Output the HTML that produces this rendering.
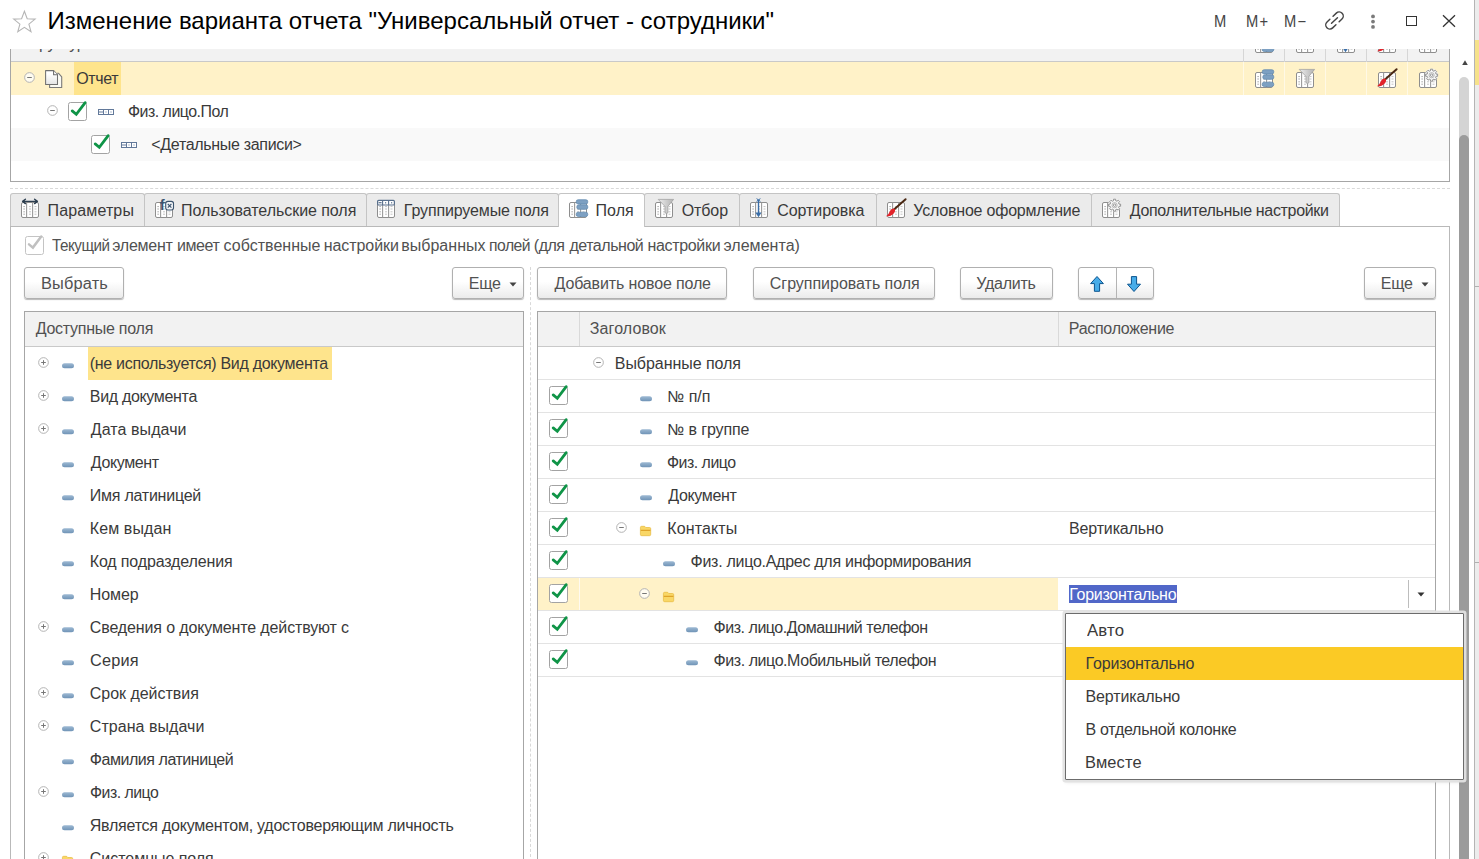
<!DOCTYPE html>
<html lang="ru"><head><meta charset="utf-8"><title>Изменение варианта отчета</title>
<style>
html,body{margin:0;padding:0;}
body{width:1479px;height:859px;overflow:hidden;background:#fff;position:relative;font-family:"Liberation Sans",sans-serif;font-size:16px;color:#333;}
svg{overflow:visible;}
.abs{position:absolute;}
.t{position:absolute;white-space:nowrap;line-height:20px;height:20px;font-size:16px;color:#3a3a3a;}
.hd{color:#515151;}
.btn{position:absolute;box-sizing:border-box;height:32px;border:1px solid #b0b0b0;border-radius:3px;background:linear-gradient(#ffffff 45%,#ebebeb);box-shadow:0 1px 1px rgba(0,0,0,.28);}
.tab{position:absolute;box-sizing:border-box;top:193px;height:33px;border:1px solid #c4c4c4;border-bottom:none;border-radius:3px 3px 0 0;background:#ebebeb;}
</style></head><body>
<svg class="abs" width="0" height="0"><defs><linearGradient id="dg" x1="0" y1="0" x2="0" y2="1"><stop offset="0" stop-color="#9db9d3"/><stop offset="1" stop-color="#6f93b6"/></linearGradient><linearGradient id="pg" x1="0" y1="0" x2="0" y2="1"><stop offset="0.25" stop-color="#ffffff"/><stop offset="1" stop-color="#e4e4e4"/></linearGradient><linearGradient id="fg" x1="0" y1="0" x2="1" y2="0"><stop offset="0" stop-color="#ededed"/><stop offset="1" stop-color="#b2b2b2"/></linearGradient></defs></svg>

<div class="abs" style="left:10px;top:49px;width:1440px;height:133px;box-sizing:border-box;border:1px solid #a6a6a6;border-top:none;background:#fff"></div>
<div class="abs" style="left:11px;top:49px;width:1438px;height:12px;background:#f2f2f2"></div>
<div class="abs" style="left:11px;top:61px;width:1438px;height:1px;background:#c9c9c9"></div>
<div class="abs" style="left:11px;top:49px;width:400px;height:12px;overflow:hidden"><div class="abs" style="left:-11px;top:-49px;width:500px;height:70px"><div id="t1" class="t hd" style="left:20.80px;top:33.5px;letter-spacing:-0.300px;">Структура отчета</div></div></div>
<div class="abs" style="left:11px;top:62px;width:1438px;height:33px;background:#fff2c8"></div>
<div class="abs" style="left:74px;top:62px;width:47px;height:33px;background:#fee48c"></div>
<div class="abs" style="left:11px;top:128px;width:1438px;height:33px;background:#f9f9f9"></div>
<div class="abs" style="left:1243px;top:49px;width:1px;height:13px;background:#d6d6d6"></div>
<div class="abs" style="left:1243px;top:62px;width:1px;height:33px;background:#fff9e6"></div>
<div class="abs" style="left:1284px;top:49px;width:1px;height:13px;background:#d6d6d6"></div>
<div class="abs" style="left:1284px;top:62px;width:1px;height:33px;background:#fff9e6"></div>
<div class="abs" style="left:1325px;top:49px;width:1px;height:13px;background:#d6d6d6"></div>
<div class="abs" style="left:1325px;top:62px;width:1px;height:33px;background:#fff9e6"></div>
<div class="abs" style="left:1366px;top:49px;width:1px;height:13px;background:#d6d6d6"></div>
<div class="abs" style="left:1366px;top:62px;width:1px;height:33px;background:#fff9e6"></div>
<div class="abs" style="left:1407px;top:49px;width:1px;height:13px;background:#d6d6d6"></div>
<div class="abs" style="left:1407px;top:62px;width:1px;height:33px;background:#fff9e6"></div>
<svg class="abs" style="left:24.0px;top:72.0px" width="11" height="11" viewBox="0 0 11 11"><circle cx="5.5" cy="5.5" r="4.85" fill="#fff" fill-opacity=".75" stroke="#b4b4b4" stroke-width="1"/><path d="M3.2 5.5H7.8" stroke="#777" stroke-width="1"/></svg>
<svg class="abs" style="left:45px;top:69.6px" width="18" height="19" viewBox="0 0 18 19"><path d="M12.2 3.2H13.4L16.7 6.9V17.5H4.6V14.4" fill="#fbfaf3" stroke="#7a7a7a" stroke-width="1.1" stroke-linejoin="round"/><path d="M0.6 0.6H8.6L12.5 4.7V14.5H0.6Z" fill="url(#pg)" stroke="#707070" stroke-width="1.05" stroke-linejoin="round"/><path d="M8.6 0.8V4.7H12.3" fill="#fff" stroke="#6e6e6e" stroke-width="1.1"/></svg>
<div id="t2" class="t " style="left:76.30px;top:69px;letter-spacing:-0.375px;">Отчет</div>
<svg class="abs" style="left:47.0px;top:105.0px" width="11" height="11" viewBox="0 0 11 11"><circle cx="5.5" cy="5.5" r="4.85" fill="#fff" fill-opacity=".75" stroke="#b4b4b4" stroke-width="1"/><path d="M3.2 5.5H7.8" stroke="#777" stroke-width="1"/></svg>
<svg class="abs" style="left:68px;top:102px" width="19" height="19" viewBox="0 0 19 19"><rect x="0.5" y="0.5" width="18" height="18" rx="2" ry="2" fill="#fff" stroke="#a3a3a3"/><path d="M4.2 8.9 L8.3 12.3 L17.2 0.7" fill="none" stroke="#0f9447" stroke-width="2.8" stroke-linecap="round" stroke-linejoin="miter"/></svg>
<svg class="abs" style="left:98px;top:109px" width="16" height="6" viewBox="0 0 16 6"><rect x="0.5" y="0.5" width="15" height="5" fill="#fff" stroke="#62799a"/><path d="M5.5 0.5V5.5M10.5 0.5V5.5" stroke="#62799a"/><path d="M1 3H5" stroke="#62799a"/><rect x="7.5" y="2.5" width="1" height="1" fill="#62799a"/><rect x="12.5" y="2.5" width="1" height="1" fill="#62799a"/></svg>
<div id="t3" class="t " style="left:128.01px;top:102px;letter-spacing:-0.500px;transform:scaleX(0.994);transform-origin:0 0;">Физ. лицо.Пол</div>
<svg class="abs" style="left:91px;top:135px" width="19" height="19" viewBox="0 0 19 19"><rect x="0.5" y="0.5" width="18" height="18" rx="2" ry="2" fill="#fff" stroke="#a3a3a3"/><path d="M4.2 8.9 L8.3 12.3 L17.2 0.7" fill="none" stroke="#0f9447" stroke-width="2.8" stroke-linecap="round" stroke-linejoin="miter"/></svg>
<svg class="abs" style="left:121px;top:142px" width="16" height="6" viewBox="0 0 16 6"><rect x="0.5" y="0.5" width="15" height="5" fill="#fff" stroke="#62799a"/><path d="M5.5 0.5V5.5M10.5 0.5V5.5" stroke="#62799a"/><path d="M1 3H5" stroke="#62799a"/><rect x="7.5" y="2.5" width="1" height="1" fill="#62799a"/><rect x="12.5" y="2.5" width="1" height="1" fill="#62799a"/></svg>
<div id="t4" class="t " style="left:151.30px;top:135px;letter-spacing:-0.318px;">&lt;Детальные записи&gt;</div>
<svg class="abs" style="left:1255px;top:72.4px" width="18" height="16" viewBox="0 0 18 16"><rect x="0.5" y="0.5" width="17" height="15" rx="1.5" fill="#fff" stroke="#8e8e8e"/><path d="M5.6 0.5V15.5M11.6 0.5V15.5" stroke="#9a9a9a" stroke-width="1.1"/><path d="M2.5 4.6h1.2M2.5 7h1.2M2.5 9.8h1.2M2.5 12.2h1.2" stroke="#8f8f8f" stroke-width="1"/><path d="M8 4.6h2M8 7h2M8 9.8h2M8 12.2h2M13.5 4.6h2M13.5 7h2M13.5 9.8h2M13.5 12.2h2" stroke="#c4c4c4" stroke-width="1"/><rect x="7.2" y="-2.3" width="11.6" height="4.3" rx="2" fill="#7da0c2" stroke="#5d86ae" stroke-width=".7"/><rect x="7.8" y="2.8" width="11" height="4.5" rx="2" fill="#7da0c2" stroke="#5d86ae" stroke-width=".7"/><rect x="7.2" y="10.2" width="11.6" height="4.3" rx="2" fill="#7da0c2" stroke="#5d86ae" stroke-width=".7"/></svg>
<svg class="abs" style="left:1296px;top:72.4px" width="18" height="16" viewBox="0 0 18 16"><rect x="0.5" y="0.5" width="17" height="15" rx="1.5" fill="#fff" stroke="#8e8e8e"/><path d="M5.6 0.5V15.5M11.6 0.5V15.5" stroke="#9a9a9a" stroke-width="1.1"/><path d="M2.5 4.6h1.2M2.5 7h1.2M2.5 9.8h1.2M2.5 12.2h1.2" stroke="#8f8f8f" stroke-width="1"/><path d="M8 4.6h2M8 7h2M8 9.8h2M8 12.2h2M13.5 4.6h2M13.5 7h2M13.5 9.8h2M13.5 12.2h2" stroke="#c4c4c4" stroke-width="1"/><path d="M3.2 -2.6H18.6L12.9 4.4V10.8Q11.4 11.8 10 10.8V4.4Z" fill="url(#fg)" stroke="#a2a2a2" stroke-width=".8" stroke-linejoin="round"/></svg>
<svg class="abs" style="left:1378.4px;top:72.4px" width="18" height="16" viewBox="0 0 18 16"><rect x="0.5" y="0.5" width="17" height="15" rx="1.5" fill="#fff" stroke="#8e8e8e"/><path d="M5.6 0.5V15.5M11.6 0.5V15.5" stroke="#9a9a9a" stroke-width="1.1"/><path d="M2.5 4.6h1.2M2.5 7h1.2M2.5 9.8h1.2M2.5 12.2h1.2" stroke="#8f8f8f" stroke-width="1"/><path d="M8 4.6h2M8 7h2M8 9.8h2M8 12.2h2M13.5 4.6h2M13.5 7h2M13.5 9.8h2M13.5 12.2h2" stroke="#c4c4c4" stroke-width="1"/><path d="M18.6 -2.8L7 7.6" stroke="#4a2813" stroke-width="2" stroke-linecap="round"/><path d="M7.4 6.4Q9.4 9.6 5.6 12.4Q2.6 14.8 -1 14.2Q1.8 12.6 2.6 9.8Q3.8 6.2 7.4 6.4Z" fill="#e2242b"/></svg>
<svg class="abs" style="left:1419px;top:72.4px" width="18" height="16" viewBox="0 0 18 16"><rect x="0.5" y="0.5" width="17" height="15" rx="1.5" fill="#fff" stroke="#8e8e8e"/><path d="M5.6 0.5V15.5M11.6 0.5V15.5" stroke="#9a9a9a" stroke-width="1.1"/><path d="M2.5 4.6h1.2M2.5 7h1.2M2.5 9.8h1.2M2.5 12.2h1.2" stroke="#8f8f8f" stroke-width="1"/><path d="M8 4.6h2M8 7h2M8 9.8h2M8 12.2h2M13.5 4.6h2M13.5 7h2M13.5 9.8h2M13.5 12.2h2" stroke="#c4c4c4" stroke-width="1"/><circle cx="12.6" cy="3.2" r="6.6" fill="#f1f1f1" fill-opacity=".9"/><path d="M17.07 2.13L18.61 2.15L18.61 4.25L17.07 4.27L16.52 5.60L17.59 6.71L16.11 8.19L15.00 7.12L13.67 7.67L13.65 9.21L11.55 9.21L11.53 7.67L10.20 7.12L9.09 8.19L7.61 6.71L8.68 5.60L8.13 4.27L6.59 4.25L6.59 2.15L8.13 2.13L8.68 0.80L7.61 -0.31L9.09 -1.79L10.20 -0.72L11.53 -1.27L11.55 -2.81L13.65 -2.81L13.67 -1.27L15.00 -0.72L16.11 -1.79L17.59 -0.31L16.52 0.80Z" fill="#f7f7f7" stroke="#8a8a8a" stroke-width=".9" stroke-linejoin="round"/><circle cx="12.6" cy="3.2" r="2.6" fill="none" stroke="#a8a8a8" stroke-width=".8"/><circle cx="12.6" cy="3.2" r="1.2" fill="#fff" stroke="#8a8a8a" stroke-width=".9"/></svg>
<div class="abs" style="left:1244px;top:49px;width:205px;height:4px;overflow:hidden">
<svg class="abs" style="left:11px;top:-12px" width="18" height="16" viewBox="0 0 18 16"><rect x="0.5" y="0.5" width="17" height="15" rx="1.5" fill="#fff" stroke="#8e8e8e"/><path d="M5.6 0.5V15.5M11.6 0.5V15.5" stroke="#9a9a9a" stroke-width="1.1"/><path d="M2.5 4.6h1.2M2.5 7h1.2M2.5 9.8h1.2M2.5 12.2h1.2" stroke="#8f8f8f" stroke-width="1"/><path d="M8 4.6h2M8 7h2M8 9.8h2M8 12.2h2M13.5 4.6h2M13.5 7h2M13.5 9.8h2M13.5 12.2h2" stroke="#c4c4c4" stroke-width="1"/><rect x="7.2" y="-2.3" width="11.6" height="4.3" rx="2" fill="#7da0c2" stroke="#5d86ae" stroke-width=".7"/><rect x="7.8" y="2.8" width="11" height="4.5" rx="2" fill="#7da0c2" stroke="#5d86ae" stroke-width=".7"/><rect x="7.2" y="10.2" width="11.6" height="4.3" rx="2" fill="#7da0c2" stroke="#5d86ae" stroke-width=".7"/></svg>
<svg class="abs" style="left:52px;top:-12px" width="18" height="16" viewBox="0 0 18 16"><rect x="0.5" y="0.5" width="17" height="15" rx="1.5" fill="#fff" stroke="#8e8e8e"/><path d="M5.6 0.5V15.5M11.6 0.5V15.5" stroke="#9a9a9a" stroke-width="1.1"/><path d="M2.5 4.6h1.2M2.5 7h1.2M2.5 9.8h1.2M2.5 12.2h1.2" stroke="#8f8f8f" stroke-width="1"/><path d="M8 4.6h2M8 7h2M8 9.8h2M8 12.2h2M13.5 4.6h2M13.5 7h2M13.5 9.8h2M13.5 12.2h2" stroke="#c4c4c4" stroke-width="1"/><rect x="0.6" y="-1.6" width="16.8" height="4.6" rx="1" fill="#fff" stroke="#586f8c" stroke-width="1.2"/><path d="M5.6 -1.6V3M11.6 -1.6V3" stroke="#586f8c" stroke-width="1.1"/><path d="M1.6 0.7H4.6" stroke="#586f8c" stroke-width="1.2"/><rect x="8" y="0.2" width="1.2" height="1.2" fill="#586f8c"/><rect x="14" y="0.2" width="1.2" height="1.2" fill="#586f8c"/></svg>
<svg class="abs" style="left:93px;top:-12px" width="18" height="16" viewBox="0 0 18 16"><rect x="0.5" y="0.5" width="17" height="15" rx="1.5" fill="#fff" stroke="#8e8e8e"/><path d="M5.6 0.5V15.5M11.6 0.5V15.5" stroke="#9a9a9a" stroke-width="1.1"/><path d="M2.5 4.6h1.2M2.5 7h1.2M2.5 9.8h1.2M2.5 12.2h1.2" stroke="#8f8f8f" stroke-width="1"/><path d="M8 4.6h2M8 7h2M8 9.8h2M8 12.2h2M13.5 4.6h2M13.5 7h2M13.5 9.8h2M13.5 12.2h2" stroke="#c4c4c4" stroke-width="1"/><path d="M8.5 -2V13" stroke="#3a6ea8" stroke-width="1.4"/><path d="M6.6 -3.4L10.4 -0.6M10.4 -3.4L6.6 -0.6" stroke="#3a6ea8" stroke-width="1"/><path d="M5.4 10.6H11.6L8.5 15.2Z" fill="#3a6ea8"/></svg>
<svg class="abs" style="left:134.4000000000001px;top:-12px" width="18" height="16" viewBox="0 0 18 16"><rect x="0.5" y="0.5" width="17" height="15" rx="1.5" fill="#fff" stroke="#8e8e8e"/><path d="M5.6 0.5V15.5M11.6 0.5V15.5" stroke="#9a9a9a" stroke-width="1.1"/><path d="M2.5 4.6h1.2M2.5 7h1.2M2.5 9.8h1.2M2.5 12.2h1.2" stroke="#8f8f8f" stroke-width="1"/><path d="M8 4.6h2M8 7h2M8 9.8h2M8 12.2h2M13.5 4.6h2M13.5 7h2M13.5 9.8h2M13.5 12.2h2" stroke="#c4c4c4" stroke-width="1"/><path d="M18.6 -2.8L7 7.6" stroke="#4a2813" stroke-width="2" stroke-linecap="round"/><path d="M7.4 6.4Q9.4 9.6 5.6 12.4Q2.6 14.8 -1 14.2Q1.8 12.6 2.6 9.8Q3.8 6.2 7.4 6.4Z" fill="#e2242b"/></svg>
<svg class="abs" style="left:175px;top:-12px" width="18" height="16" viewBox="0 0 18 16"><rect x="0.5" y="0.5" width="17" height="15" rx="1.5" fill="#fff" stroke="#8e8e8e"/><path d="M5.6 0.5V15.5M11.6 0.5V15.5" stroke="#9a9a9a" stroke-width="1.1"/><path d="M2.5 4.6h1.2M2.5 7h1.2M2.5 9.8h1.2M2.5 12.2h1.2" stroke="#8f8f8f" stroke-width="1"/><path d="M8 4.6h2M8 7h2M8 9.8h2M8 12.2h2M13.5 4.6h2M13.5 7h2M13.5 9.8h2M13.5 12.2h2" stroke="#c4c4c4" stroke-width="1"/><circle cx="12.6" cy="3.2" r="6.6" fill="#f1f1f1" fill-opacity=".9"/><path d="M17.07 2.13L18.61 2.15L18.61 4.25L17.07 4.27L16.52 5.60L17.59 6.71L16.11 8.19L15.00 7.12L13.67 7.67L13.65 9.21L11.55 9.21L11.53 7.67L10.20 7.12L9.09 8.19L7.61 6.71L8.68 5.60L8.13 4.27L6.59 4.25L6.59 2.15L8.13 2.13L8.68 0.80L7.61 -0.31L9.09 -1.79L10.20 -0.72L11.53 -1.27L11.55 -2.81L13.65 -2.81L13.67 -1.27L15.00 -0.72L16.11 -1.79L17.59 -0.31L16.52 0.80Z" fill="#f7f7f7" stroke="#8a8a8a" stroke-width=".9" stroke-linejoin="round"/><circle cx="12.6" cy="3.2" r="2.6" fill="none" stroke="#a8a8a8" stroke-width=".8"/><circle cx="12.6" cy="3.2" r="1.2" fill="#fff" stroke="#8a8a8a" stroke-width=".9"/></svg>
</div>
<div class="abs" style="left:0;top:0;width:1474px;height:49px;background:#fff"></div>
<svg class="abs" style="left:12px;top:9px" width="26" height="24" viewBox="0 0 26 24"><path d="M12.4 2.3 L15.2 9.8 L23.1 10.1 L16.9 15.1 L19.0 22.7 L12.4 18.3 L5.8 22.7 L7.9 15.1 L1.7 10.1 L9.6 9.8 Z" fill="#fff" stroke="#b5b5b5" stroke-width="1.1" stroke-linejoin="miter"/></svg>
<div class="abs" style="left:47.5px;top:6px;font-size:24px;line-height:30px;white-space:nowrap;color:#000" id="title">Изменение варианта отчета "Универсальный отчет - сотрудники"</div>
<div class="t" style="left:1213.5px;top:12px;color:#444;transform:scaleX(.92);transform-origin:0 0">M</div>
<div class="t" style="left:1245.5px;top:12px;color:#444;letter-spacing:1.3px;transform:scaleX(.92);transform-origin:0 0">M+</div>
<div class="t" style="left:1283.5px;top:12px;color:#444;letter-spacing:1.3px;transform:scaleX(.92);transform-origin:0 0">M−</div>
<svg class="abs" style="left:1320px;top:6px" width="30" height="30" viewBox="1320 6 30 30" fill="none" stroke="#444" stroke-width="1.45" stroke-linecap="round"><g transform="translate(1334.5 20.5) rotate(-43.5)"><path d="M1.9 -4.1H6.4A4.1 4.1 0 0 1 6.4 4.1H2.5"/><path d="M-1.9 4.1H-6.4A4.1 4.1 0 0 1 -6.4 -4.1H-2.5"/><path d="M-4.1 0H4.1"/></g></svg>
<svg class="abs" style="left:1369px;top:12.5px" width="8" height="18" viewBox="0 0 8 18"><circle cx="4" cy="3.4" r="1.9" fill="#7a7a7a"/><circle cx="4" cy="8.6" r="1.9" fill="#7a7a7a"/><circle cx="4" cy="13.9" r="1.9" fill="#7a7a7a"/></svg>
<div class="abs" style="left:1406.2px;top:15.8px;width:8.4px;height:8.4px;border:1.25px solid #333"></div>
<svg class="abs" style="left:1442px;top:14px" width="14" height="14" viewBox="0 0 14 14"><path d="M1 1.3L13 12.7M13 1.3L1 12.7" stroke="#333" stroke-width="1.3"/></svg>
<div class="abs" style="left:10px;top:188px;width:1440px;height:0;border-top:1px dashed #d9d9d9"></div>
<div class="abs" style="left:1450px;top:49px;width:24px;height:810px;background:#fff"></div>
<svg class="abs" style="left:1461.5px;top:60px" width="6" height="5" viewBox="0 0 6 5"><path d="M3 0.2L5.8 5H0.2Z" fill="#444"/></svg>
<div class="abs" style="left:1459px;top:77px;width:10px;height:800px;border-radius:5px;background:#d4d4d4"></div>
<div class="abs" style="left:1459px;top:135px;width:10px;height:800px;border-radius:5px;background:#9b9b9b"></div>
<div class="abs" style="left:1474px;top:0;width:5px;height:859px;background:#ececec;border-left:1px solid #b4b4b4;box-sizing:border-box"></div>
<div class="abs" style="left:1475px;top:40px;width:4px;height:45px;background:#f6e28a"></div>
<div class="abs" style="left:1475px;top:286px;width:4px;height:1px;background:#b0b0b0"></div>
<div class="abs" style="left:1475px;top:562px;width:4px;height:1px;background:#b0b0b0"></div>
<div class="abs" style="left:10px;top:226px;width:1440px;height:700px;box-sizing:border-box;border:1px solid #b9b9b9;background:#fff"></div>
<div class="tab" style="left:10px;width:135px;"></div>
<div id="t5" class="t " style="left:47.55px;top:200.5px;letter-spacing:0.131px;">Параметры</div>
<div class="tab" style="left:144px;width:223px;"></div>
<div id="t6" class="t " style="left:181.05px;top:200.5px;letter-spacing:-0.053px;">Пользовательские поля</div>
<div class="tab" style="left:366px;width:193px;"></div>
<div id="t7" class="t " style="left:403.80px;top:200.5px;letter-spacing:-0.131px;">Группируемые поля</div>
<div class="tab" style="left:558px;width:87px;background:#fff;height:34px;"></div>
<div id="t8" class="t " style="left:595.55px;top:200.5px;letter-spacing:0.017px;">Поля</div>
<div class="tab" style="left:644px;width:96px;"></div>
<div id="t9" class="t " style="left:681.80px;top:200.5px;letter-spacing:-0.125px;">Отбор</div>
<div class="tab" style="left:739px;width:138px;"></div>
<div id="t10" class="t " style="left:777.30px;top:200.5px;letter-spacing:-0.083px;">Сортировка</div>
<div class="tab" style="left:876px;width:216px;"></div>
<div id="t11" class="t " style="left:913.30px;top:200.5px;letter-spacing:-0.206px;">Условное оформление</div>
<div class="tab" style="left:1091px;width:249px;"></div>
<div id="t12" class="t " style="left:1129.80px;top:200.5px;letter-spacing:-0.335px;">Дополнительные настройки</div>
<svg class="abs" style="left:21px;top:202.2px" width="18" height="16" viewBox="0 0 18 16"><rect x="0.5" y="0.5" width="17" height="15" rx="1.5" fill="#fff" stroke="#8e8e8e"/><path d="M5.6 0.5V15.5M11.6 0.5V15.5" stroke="#9a9a9a" stroke-width="1.1"/><path d="M2.5 4.6h1.2M2.5 7h1.2M2.5 9.8h1.2M2.5 12.2h1.2" stroke="#8f8f8f" stroke-width="1"/><path d="M8 4.6h2M8 7h2M8 9.8h2M8 12.2h2M13.5 4.6h2M13.5 7h2M13.5 9.8h2M13.5 12.2h2" stroke="#c4c4c4" stroke-width="1"/><path d="M1.8 -0.6H16.2M4.4 -2.8L1.6 -0.6L4.4 1.6M13.6 -2.8L16.4 -0.6L13.6 1.6" stroke="#2c3e4f" fill="none" stroke-width="1.4" stroke-linejoin="round" stroke-linecap="round"/></svg>
<svg class="abs" style="left:155px;top:202.2px" width="18" height="16" viewBox="0 0 18 16"><rect x="0.5" y="0.5" width="17" height="15" rx="1.5" fill="#fff" stroke="#8e8e8e"/><path d="M5.6 0.5V15.5M11.6 0.5V15.5" stroke="#9a9a9a" stroke-width="1.1"/><path d="M2.5 4.6h1.2M2.5 7h1.2M2.5 9.8h1.2M2.5 12.2h1.2" stroke="#8f8f8f" stroke-width="1"/><path d="M8 4.6h2M8 7h2M8 9.8h2M8 12.2h2M13.5 4.6h2M13.5 7h2M13.5 9.8h2M13.5 12.2h2" stroke="#c4c4c4" stroke-width="1"/><text x="4.7" y="7.7" font-family="Liberation Sans, sans-serif" font-size="14.8" font-weight="bold" fill="#3b546f">f</text><rect x="10.7" y="-0.6" width="7.8" height="8.6" rx="2.2" fill="#f2f4f7" stroke="#3b546f" stroke-width="1.1"/><path d="M12.8 2l3.6 3.6M16.4 2l-3.6 3.6" stroke="#3b546f" stroke-width="1.1"/></svg>
<svg class="abs" style="left:377px;top:202.2px" width="18" height="16" viewBox="0 0 18 16"><rect x="0.5" y="0.5" width="17" height="15" rx="1.5" fill="#fff" stroke="#8e8e8e"/><path d="M5.6 0.5V15.5M11.6 0.5V15.5" stroke="#9a9a9a" stroke-width="1.1"/><path d="M2.5 4.6h1.2M2.5 7h1.2M2.5 9.8h1.2M2.5 12.2h1.2" stroke="#8f8f8f" stroke-width="1"/><path d="M8 4.6h2M8 7h2M8 9.8h2M8 12.2h2M13.5 4.6h2M13.5 7h2M13.5 9.8h2M13.5 12.2h2" stroke="#c4c4c4" stroke-width="1"/><rect x="0.6" y="-1.6" width="16.8" height="4.6" rx="1" fill="#fff" stroke="#586f8c" stroke-width="1.2"/><path d="M5.6 -1.6V3M11.6 -1.6V3" stroke="#586f8c" stroke-width="1.1"/><path d="M1.6 0.7H4.6" stroke="#586f8c" stroke-width="1.2"/><rect x="8" y="0.2" width="1.2" height="1.2" fill="#586f8c"/><rect x="14" y="0.2" width="1.2" height="1.2" fill="#586f8c"/></svg>
<svg class="abs" style="left:569px;top:202.2px" width="18" height="16" viewBox="0 0 18 16"><rect x="0.5" y="0.5" width="17" height="15" rx="1.5" fill="#fff" stroke="#8e8e8e"/><path d="M5.6 0.5V15.5M11.6 0.5V15.5" stroke="#9a9a9a" stroke-width="1.1"/><path d="M2.5 4.6h1.2M2.5 7h1.2M2.5 9.8h1.2M2.5 12.2h1.2" stroke="#8f8f8f" stroke-width="1"/><path d="M8 4.6h2M8 7h2M8 9.8h2M8 12.2h2M13.5 4.6h2M13.5 7h2M13.5 9.8h2M13.5 12.2h2" stroke="#c4c4c4" stroke-width="1"/><rect x="7.2" y="-2.3" width="11.6" height="4.3" rx="2" fill="#7da0c2" stroke="#5d86ae" stroke-width=".7"/><rect x="7.8" y="2.8" width="11" height="4.5" rx="2" fill="#7da0c2" stroke="#5d86ae" stroke-width=".7"/><rect x="7.2" y="10.2" width="11.6" height="4.3" rx="2" fill="#7da0c2" stroke="#5d86ae" stroke-width=".7"/></svg>
<svg class="abs" style="left:655px;top:202.2px" width="18" height="16" viewBox="0 0 18 16"><rect x="0.5" y="0.5" width="17" height="15" rx="1.5" fill="#fff" stroke="#8e8e8e"/><path d="M5.6 0.5V15.5M11.6 0.5V15.5" stroke="#9a9a9a" stroke-width="1.1"/><path d="M2.5 4.6h1.2M2.5 7h1.2M2.5 9.8h1.2M2.5 12.2h1.2" stroke="#8f8f8f" stroke-width="1"/><path d="M8 4.6h2M8 7h2M8 9.8h2M8 12.2h2M13.5 4.6h2M13.5 7h2M13.5 9.8h2M13.5 12.2h2" stroke="#c4c4c4" stroke-width="1"/><path d="M3.2 -2.6H18.6L12.9 4.4V10.8Q11.4 11.8 10 10.8V4.4Z" fill="url(#fg)" stroke="#a2a2a2" stroke-width=".8" stroke-linejoin="round"/></svg>
<svg class="abs" style="left:750px;top:202.2px" width="18" height="16" viewBox="0 0 18 16"><rect x="0.5" y="0.5" width="17" height="15" rx="1.5" fill="#fff" stroke="#8e8e8e"/><path d="M5.6 0.5V15.5M11.6 0.5V15.5" stroke="#9a9a9a" stroke-width="1.1"/><path d="M2.5 4.6h1.2M2.5 7h1.2M2.5 9.8h1.2M2.5 12.2h1.2" stroke="#8f8f8f" stroke-width="1"/><path d="M8 4.6h2M8 7h2M8 9.8h2M8 12.2h2M13.5 4.6h2M13.5 7h2M13.5 9.8h2M13.5 12.2h2" stroke="#c4c4c4" stroke-width="1"/><path d="M8.5 -2V13" stroke="#3a6ea8" stroke-width="1.4"/><path d="M6.6 -3.4L10.4 -0.6M10.4 -3.4L6.6 -0.6" stroke="#3a6ea8" stroke-width="1"/><path d="M5.4 10.6H11.6L8.5 15.2Z" fill="#3a6ea8"/></svg>
<svg class="abs" style="left:887px;top:202.2px" width="18" height="16" viewBox="0 0 18 16"><rect x="0.5" y="0.5" width="17" height="15" rx="1.5" fill="#fff" stroke="#8e8e8e"/><path d="M5.6 0.5V15.5M11.6 0.5V15.5" stroke="#9a9a9a" stroke-width="1.1"/><path d="M2.5 4.6h1.2M2.5 7h1.2M2.5 9.8h1.2M2.5 12.2h1.2" stroke="#8f8f8f" stroke-width="1"/><path d="M8 4.6h2M8 7h2M8 9.8h2M8 12.2h2M13.5 4.6h2M13.5 7h2M13.5 9.8h2M13.5 12.2h2" stroke="#c4c4c4" stroke-width="1"/><path d="M18.6 -2.8L7 7.6" stroke="#4a2813" stroke-width="2" stroke-linecap="round"/><path d="M7.4 6.4Q9.4 9.6 5.6 12.4Q2.6 14.8 -1 14.2Q1.8 12.6 2.6 9.8Q3.8 6.2 7.4 6.4Z" fill="#e2242b"/></svg>
<svg class="abs" style="left:1102px;top:202.2px" width="18" height="16" viewBox="0 0 18 16"><rect x="0.5" y="0.5" width="17" height="15" rx="1.5" fill="#fff" stroke="#8e8e8e"/><path d="M5.6 0.5V15.5M11.6 0.5V15.5" stroke="#9a9a9a" stroke-width="1.1"/><path d="M2.5 4.6h1.2M2.5 7h1.2M2.5 9.8h1.2M2.5 12.2h1.2" stroke="#8f8f8f" stroke-width="1"/><path d="M8 4.6h2M8 7h2M8 9.8h2M8 12.2h2M13.5 4.6h2M13.5 7h2M13.5 9.8h2M13.5 12.2h2" stroke="#c4c4c4" stroke-width="1"/><circle cx="12.6" cy="3.2" r="6.6" fill="#f1f1f1" fill-opacity=".9"/><path d="M17.07 2.13L18.61 2.15L18.61 4.25L17.07 4.27L16.52 5.60L17.59 6.71L16.11 8.19L15.00 7.12L13.67 7.67L13.65 9.21L11.55 9.21L11.53 7.67L10.20 7.12L9.09 8.19L7.61 6.71L8.68 5.60L8.13 4.27L6.59 4.25L6.59 2.15L8.13 2.13L8.68 0.80L7.61 -0.31L9.09 -1.79L10.20 -0.72L11.53 -1.27L11.55 -2.81L13.65 -2.81L13.67 -1.27L15.00 -0.72L16.11 -1.79L17.59 -0.31L16.52 0.80Z" fill="#f7f7f7" stroke="#8a8a8a" stroke-width=".9" stroke-linejoin="round"/><circle cx="12.6" cy="3.2" r="2.6" fill="none" stroke="#a8a8a8" stroke-width=".8"/><circle cx="12.6" cy="3.2" r="1.2" fill="#fff" stroke="#8a8a8a" stroke-width=".9"/></svg>
<svg class="abs" style="left:25px;top:236px" width="19" height="19" viewBox="0 0 19 19"><rect x="0.5" y="0.5" width="18" height="18" rx="2" fill="#fff" stroke="#c4c4c4"/><path d="M4 8.4L7.9 11.6L16.2 0.6" fill="none" stroke="#c0c0c0" stroke-width="2.5" stroke-linecap="round"/></svg>
<div id="t13" class="t hd" style="left:51.90px;top:236px;letter-spacing:-0.500px;transform:scaleX(0.9513);transform-origin:0 0;">Текущий</div>
<div id="t14" class="t hd" style="left:112.30px;top:236px;letter-spacing:-0.250px;">элемент</div>
<div id="t15" class="t hd" style="left:176.90px;top:236px;letter-spacing:-0.400px;">имеет</div>
<div id="t16" class="t hd" style="left:223.60px;top:236px;letter-spacing:0.020px;">собственные</div>
<div id="t17" class="t hd" style="left:323.80px;top:236px;letter-spacing:-0.087px;">настройки</div>
<div id="t18" class="t hd" style="left:401.20px;top:236px;letter-spacing:0.025px;">выбранных</div>
<div id="t19" class="t hd" style="left:488.62px;top:236px;letter-spacing:-0.500px;transform:scaleX(0.9825);transform-origin:0 0;">полей</div>
<div id="t20" class="t hd" style="left:533.80px;top:236px;letter-spacing:-0.500px;">(для</div>
<div id="t21" class="t hd" style="left:569.40px;top:236px;letter-spacing:-0.462px;">детальной</div>
<div id="t22" class="t hd" style="left:647.40px;top:236px;letter-spacing:-0.313px;">настройки</div>
<div id="t23" class="t hd" style="left:723.40px;top:236px;letter-spacing:0.050px;">элемента)</div>
<div class="btn" style="left:24px;top:267px;width:100px"></div>
<div id="t24" class="t hd" style="left:40.53px;top:273.5px;letter-spacing:0.150px;transform:scaleX(1.0236);transform-origin:0 0;">Выбрать</div>
<div class="btn" style="left:452px;top:267px;width:72px"></div>
<div id="t25" class="t hd" style="left:468.80px;top:273.5px;letter-spacing:-0.200px;">Еще</div>
<div class="btn" style="left:537px;top:267px;width:190px"></div>
<div id="t26" class="t hd" style="left:554.55px;top:273.5px;letter-spacing:-0.136px;">Добавить новое поле</div>
<div class="btn" style="left:753px;top:267px;width:182px"></div>
<div id="t27" class="t hd" style="left:769.80px;top:273.5px;letter-spacing:-0.024px;">Сгруппировать поля</div>
<div class="btn" style="left:960px;top:267px;width:93px"></div>
<div id="t28" class="t hd" style="left:976.30px;top:273.5px;letter-spacing:-0.267px;">Удалить</div>
<div class="btn" style="left:1078px;top:267px;width:76px"></div>
<div class="btn" style="left:1364px;top:267px;width:72px"></div>
<div id="t29" class="t hd" style="left:1380.80px;top:273.5px;letter-spacing:-0.200px;">Еще</div>
<div class="abs" style="left:1116px;top:268px;width:1px;height:30px;background:#b4b4b4"></div>
<svg class="abs" style="left:509px;top:282px" width="8" height="5" viewBox="0 0 8 5"><path d="M0.5 0.5H7.5L4 4.5Z" fill="#444"/></svg>
<svg class="abs" style="left:1421px;top:282px" width="8" height="5" viewBox="0 0 8 5"><path d="M0.5 0.5H7.5L4 4.5Z" fill="#444"/></svg>
<svg class="abs" style="left:0;top:0" width="1479" height="320" viewBox="0 0 1479 320"><path d="M1097 276.5L1103.4 283.6H1099.6V291.3H1094.4V283.6H1090.6Z" fill="#48ade9" stroke="#0c548f" stroke-width="1" stroke-linejoin="round"/><path d="M1134 291.5L1140.5 284.2H1136.6V276.6H1131.4V284.2H1127.5Z" fill="#48ade9" stroke="#0c548f" stroke-width="1" stroke-linejoin="round"/></svg>
<div class="abs" style="left:530px;top:267px;width:0;height:600px;border-left:1px dashed #d9d9d9"></div>
<div class="abs" style="left:24px;top:311px;width:500px;height:600px;box-sizing:border-box;border:1px solid #a6a6a6;background:#fff"></div>
<div class="abs" style="left:25px;top:312px;width:498px;height:34px;background:#f2f2f2"></div>
<div class="abs" style="left:25px;top:346px;width:498px;height:1px;background:#c9c9c9"></div>
<div id="t30" class="t hd" style="left:35.70px;top:318.5px;letter-spacing:-0.258px;">Доступные поля</div>
<div class="abs" style="left:88px;top:347px;width:244px;height:33px;background:#fee48c"></div>
<svg class="abs" style="left:38.0px;top:357.0px" width="11" height="11" viewBox="0 0 11 11"><circle cx="5.5" cy="5.5" r="4.85" fill="#fff" fill-opacity=".75" stroke="#b4b4b4" stroke-width="1"/><path d="M3.2 5.5H7.8" stroke="#777" stroke-width="1"/><path d="M5.5 3.2V7.8" stroke="#777" stroke-width="1"/></svg>
<svg class="abs" style="left:62px;top:363px" width="12" height="6" viewBox="0 0 12 6"><rect x="0" y="0.3" width="12" height="5" rx="2.5" fill="url(#dg)"/></svg>
<div id="t31" class="t " style="left:89.80px;top:353.5px;letter-spacing:-0.310px;">(не используется) Вид документа</div>
<svg class="abs" style="left:38.0px;top:390.0px" width="11" height="11" viewBox="0 0 11 11"><circle cx="5.5" cy="5.5" r="4.85" fill="#fff" fill-opacity=".75" stroke="#b4b4b4" stroke-width="1"/><path d="M3.2 5.5H7.8" stroke="#777" stroke-width="1"/><path d="M5.5 3.2V7.8" stroke="#777" stroke-width="1"/></svg>
<svg class="abs" style="left:62px;top:396px" width="12" height="6" viewBox="0 0 12 6"><rect x="0" y="0.3" width="12" height="5" rx="2.5" fill="url(#dg)"/></svg>
<div id="t32" class="t " style="left:89.80px;top:386.5px;letter-spacing:-0.325px;">Вид документа</div>
<svg class="abs" style="left:38.0px;top:423.0px" width="11" height="11" viewBox="0 0 11 11"><circle cx="5.5" cy="5.5" r="4.85" fill="#fff" fill-opacity=".75" stroke="#b4b4b4" stroke-width="1"/><path d="M3.2 5.5H7.8" stroke="#777" stroke-width="1"/><path d="M5.5 3.2V7.8" stroke="#777" stroke-width="1"/></svg>
<svg class="abs" style="left:62px;top:429px" width="12" height="6" viewBox="0 0 12 6"><rect x="0" y="0.3" width="12" height="5" rx="2.5" fill="url(#dg)"/></svg>
<div id="t33" class="t " style="left:90.80px;top:419.5px;letter-spacing:0.070px;">Дата выдачи</div>
<svg class="abs" style="left:62px;top:462px" width="12" height="6" viewBox="0 0 12 6"><rect x="0" y="0.3" width="12" height="5" rx="2.5" fill="url(#dg)"/></svg>
<div id="t34" class="t " style="left:90.80px;top:452.5px;letter-spacing:-0.379px;">Документ</div>
<svg class="abs" style="left:62px;top:495px" width="12" height="6" viewBox="0 0 12 6"><rect x="0" y="0.3" width="12" height="5" rx="2.5" fill="url(#dg)"/></svg>
<div id="t35" class="t " style="left:89.80px;top:485.5px;letter-spacing:-0.242px;">Имя латиницей</div>
<svg class="abs" style="left:62px;top:528px" width="12" height="6" viewBox="0 0 12 6"><rect x="0" y="0.3" width="12" height="5" rx="2.5" fill="url(#dg)"/></svg>
<div id="t36" class="t " style="left:89.80px;top:518.5px;letter-spacing:0.100px;">Кем выдан</div>
<svg class="abs" style="left:62px;top:561px" width="12" height="6" viewBox="0 0 12 6"><rect x="0" y="0.3" width="12" height="5" rx="2.5" fill="url(#dg)"/></svg>
<div id="t37" class="t " style="left:89.80px;top:551.5px;letter-spacing:-0.147px;">Код подразделения</div>
<svg class="abs" style="left:62px;top:594px" width="12" height="6" viewBox="0 0 12 6"><rect x="0" y="0.3" width="12" height="5" rx="2.5" fill="url(#dg)"/></svg>
<div id="t38" class="t " style="left:89.80px;top:584.5px;letter-spacing:-0.125px;">Номер</div>
<svg class="abs" style="left:38.0px;top:621.0px" width="11" height="11" viewBox="0 0 11 11"><circle cx="5.5" cy="5.5" r="4.85" fill="#fff" fill-opacity=".75" stroke="#b4b4b4" stroke-width="1"/><path d="M3.2 5.5H7.8" stroke="#777" stroke-width="1"/><path d="M5.5 3.2V7.8" stroke="#777" stroke-width="1"/></svg>
<svg class="abs" style="left:62px;top:627px" width="12" height="6" viewBox="0 0 12 6"><rect x="0" y="0.3" width="12" height="5" rx="2.5" fill="url(#dg)"/></svg>
<div id="t39" class="t " style="left:89.80px;top:617.5px;letter-spacing:-0.132px;">Сведения о документе действуют с</div>
<svg class="abs" style="left:62px;top:660px" width="12" height="6" viewBox="0 0 12 6"><rect x="0" y="0.3" width="12" height="5" rx="2.5" fill="url(#dg)"/></svg>
<div id="t40" class="t " style="left:89.78px;top:650.5px;letter-spacing:0.150px;transform:scaleX(1.0197);transform-origin:0 0;">Серия</div>
<svg class="abs" style="left:38.0px;top:687.0px" width="11" height="11" viewBox="0 0 11 11"><circle cx="5.5" cy="5.5" r="4.85" fill="#fff" fill-opacity=".75" stroke="#b4b4b4" stroke-width="1"/><path d="M3.2 5.5H7.8" stroke="#777" stroke-width="1"/><path d="M5.5 3.2V7.8" stroke="#777" stroke-width="1"/></svg>
<svg class="abs" style="left:62px;top:693px" width="12" height="6" viewBox="0 0 12 6"><rect x="0" y="0.3" width="12" height="5" rx="2.5" fill="url(#dg)"/></svg>
<div id="t41" class="t " style="left:89.80px;top:683.5px;letter-spacing:-0.033px;">Срок действия</div>
<svg class="abs" style="left:38.0px;top:720.0px" width="11" height="11" viewBox="0 0 11 11"><circle cx="5.5" cy="5.5" r="4.85" fill="#fff" fill-opacity=".75" stroke="#b4b4b4" stroke-width="1"/><path d="M3.2 5.5H7.8" stroke="#777" stroke-width="1"/><path d="M5.5 3.2V7.8" stroke="#777" stroke-width="1"/></svg>
<svg class="abs" style="left:62px;top:726px" width="12" height="6" viewBox="0 0 12 6"><rect x="0" y="0.3" width="12" height="5" rx="2.5" fill="url(#dg)"/></svg>
<div id="t42" class="t " style="left:89.80px;top:716.5px;letter-spacing:0.050px;">Страна выдачи</div>
<svg class="abs" style="left:62px;top:759px" width="12" height="6" viewBox="0 0 12 6"><rect x="0" y="0.3" width="12" height="5" rx="2.5" fill="url(#dg)"/></svg>
<div id="t43" class="t " style="left:89.80px;top:749.5px;letter-spacing:-0.459px;">Фамилия латиницей</div>
<svg class="abs" style="left:38.0px;top:786.0px" width="11" height="11" viewBox="0 0 11 11"><circle cx="5.5" cy="5.5" r="4.85" fill="#fff" fill-opacity=".75" stroke="#b4b4b4" stroke-width="1"/><path d="M3.2 5.5H7.8" stroke="#777" stroke-width="1"/><path d="M5.5 3.2V7.8" stroke="#777" stroke-width="1"/></svg>
<svg class="abs" style="left:62px;top:792px" width="12" height="6" viewBox="0 0 12 6"><rect x="0" y="0.3" width="12" height="5" rx="2.5" fill="url(#dg)"/></svg>
<div id="t44" class="t " style="left:89.81px;top:782.5px;letter-spacing:-0.500px;transform:scaleX(0.9897);transform-origin:0 0;">Физ. лицо</div>
<svg class="abs" style="left:62px;top:825px" width="12" height="6" viewBox="0 0 12 6"><rect x="0" y="0.3" width="12" height="5" rx="2.5" fill="url(#dg)"/></svg>
<div id="t45" class="t " style="left:89.80px;top:815.5px;letter-spacing:-0.235px;">Является документом, удостоверяющим личность</div>
<svg class="abs" style="left:38.0px;top:852.0px" width="11" height="11" viewBox="0 0 11 11"><circle cx="5.5" cy="5.5" r="4.85" fill="#fff" fill-opacity=".75" stroke="#b4b4b4" stroke-width="1"/><path d="M3.2 5.5H7.8" stroke="#777" stroke-width="1"/><path d="M5.5 3.2V7.8" stroke="#777" stroke-width="1"/></svg>
<svg class="abs" style="left:62px;top:856px" width="11" height="10" viewBox="0 0 11 10"><path d="M0.4 1.6 Q0.4 0.3 1.6 0.3 H4.2 Q5 0.3 5.5 1.1 L5.8 1.5 H9.6 Q10.7 1.5 10.7 2.7 V8.4 Q10.7 9.7 9.5 9.7 H1.6 Q0.4 9.7 0.4 8.4 Z" fill="#f9d766" stroke="#e6b93c" stroke-width=".7"/><path d="M0.8 4.3 H10.4" stroke="#d9981c" stroke-width="1"/></svg>
<div id="t46" class="t " style="left:89.80px;top:848.5px;letter-spacing:-0.035px;">Системные поля</div>
<div class="abs" style="left:537px;top:311px;width:899px;height:600px;box-sizing:border-box;border:1px solid #a6a6a6;background:#fff"></div>
<div class="abs" style="left:538px;top:312px;width:897px;height:34px;background:#f2f2f2"></div>
<div class="abs" style="left:538px;top:346px;width:897px;height:1px;background:#c9c9c9"></div>
<div class="abs" style="left:579px;top:312px;width:1px;height:34px;background:#d9d9d9"></div>
<div class="abs" style="left:1058px;top:312px;width:1px;height:34px;background:#d9d9d9"></div>
<div id="t47" class="t hd" style="left:589.80px;top:318.5px;letter-spacing:0.100px;">Заголовок</div>
<div id="t48" class="t hd" style="left:1068.80px;top:318.5px;letter-spacing:-0.282px;">Расположение</div>
<div class="abs" style="left:538px;top:578px;width:897px;height:32px;background:#fff2c8"></div>
<div class="abs" style="left:579px;top:578px;width:1px;height:32px;background:#fffaf0"></div>
<div class="abs" style="left:538px;top:379px;width:897px;height:1px;background:#e3e3e3"></div>
<div class="abs" style="left:538px;top:412px;width:897px;height:1px;background:#e3e3e3"></div>
<div class="abs" style="left:538px;top:445px;width:897px;height:1px;background:#e3e3e3"></div>
<div class="abs" style="left:538px;top:478px;width:897px;height:1px;background:#e3e3e3"></div>
<div class="abs" style="left:538px;top:511px;width:897px;height:1px;background:#e3e3e3"></div>
<div class="abs" style="left:538px;top:544px;width:897px;height:1px;background:#e3e3e3"></div>
<div class="abs" style="left:538px;top:577px;width:897px;height:1px;background:#e3e3e3"></div>
<div class="abs" style="left:538px;top:610px;width:897px;height:1px;background:#e3e3e3"></div>
<div class="abs" style="left:538px;top:643px;width:897px;height:1px;background:#e3e3e3"></div>
<div class="abs" style="left:538px;top:676px;width:897px;height:1px;background:#e3e3e3"></div>
<svg class="abs" style="left:593.0px;top:357.0px" width="11" height="11" viewBox="0 0 11 11"><circle cx="5.5" cy="5.5" r="4.85" fill="#fff" fill-opacity=".75" stroke="#b4b4b4" stroke-width="1"/><path d="M3.2 5.5H7.8" stroke="#777" stroke-width="1"/></svg>
<div id="t49" class="t " style="left:614.80px;top:353.5px;letter-spacing:-0.054px;">Выбранные поля</div>
<svg class="abs" style="left:549px;top:386px" width="19" height="19" viewBox="0 0 19 19"><rect x="0.5" y="0.5" width="18" height="18" rx="2" ry="2" fill="#fff" stroke="#a3a3a3"/><path d="M4.2 8.9 L8.3 12.3 L17.2 0.7" fill="none" stroke="#0f9447" stroke-width="2.8" stroke-linecap="round" stroke-linejoin="miter"/></svg>
<svg class="abs" style="left:640px;top:396px" width="12" height="6" viewBox="0 0 12 6"><rect x="0" y="0.3" width="12" height="5" rx="2.5" fill="url(#dg)"/></svg>
<div id="t50" class="t " style="left:667.05px;top:386.5px;letter-spacing:0.000px;">№ п/п</div>
<svg class="abs" style="left:549px;top:419px" width="19" height="19" viewBox="0 0 19 19"><rect x="0.5" y="0.5" width="18" height="18" rx="2" ry="2" fill="#fff" stroke="#a3a3a3"/><path d="M4.2 8.9 L8.3 12.3 L17.2 0.7" fill="none" stroke="#0f9447" stroke-width="2.8" stroke-linecap="round" stroke-linejoin="miter"/></svg>
<svg class="abs" style="left:640px;top:429px" width="12" height="6" viewBox="0 0 12 6"><rect x="0" y="0.3" width="12" height="5" rx="2.5" fill="url(#dg)"/></svg>
<div id="t51" class="t " style="left:667.05px;top:419.5px;letter-spacing:-0.111px;">№ в группе</div>
<svg class="abs" style="left:549px;top:452px" width="19" height="19" viewBox="0 0 19 19"><rect x="0.5" y="0.5" width="18" height="18" rx="2" ry="2" fill="#fff" stroke="#a3a3a3"/><path d="M4.2 8.9 L8.3 12.3 L17.2 0.7" fill="none" stroke="#0f9447" stroke-width="2.8" stroke-linecap="round" stroke-linejoin="miter"/></svg>
<svg class="abs" style="left:640px;top:462px" width="12" height="6" viewBox="0 0 12 6"><rect x="0" y="0.3" width="12" height="5" rx="2.5" fill="url(#dg)"/></svg>
<div id="t52" class="t " style="left:667.31px;top:452.5px;letter-spacing:-0.500px;transform:scaleX(0.9934);transform-origin:0 0;">Физ. лицо</div>
<svg class="abs" style="left:549px;top:485px" width="19" height="19" viewBox="0 0 19 19"><rect x="0.5" y="0.5" width="18" height="18" rx="2" ry="2" fill="#fff" stroke="#a3a3a3"/><path d="M4.2 8.9 L8.3 12.3 L17.2 0.7" fill="none" stroke="#0f9447" stroke-width="2.8" stroke-linecap="round" stroke-linejoin="miter"/></svg>
<svg class="abs" style="left:640px;top:495px" width="12" height="6" viewBox="0 0 12 6"><rect x="0" y="0.3" width="12" height="5" rx="2.5" fill="url(#dg)"/></svg>
<div id="t53" class="t " style="left:668.30px;top:485.5px;letter-spacing:-0.343px;">Документ</div>
<svg class="abs" style="left:549px;top:518px" width="19" height="19" viewBox="0 0 19 19"><rect x="0.5" y="0.5" width="18" height="18" rx="2" ry="2" fill="#fff" stroke="#a3a3a3"/><path d="M4.2 8.9 L8.3 12.3 L17.2 0.7" fill="none" stroke="#0f9447" stroke-width="2.8" stroke-linecap="round" stroke-linejoin="miter"/></svg>
<svg class="abs" style="left:640px;top:526px" width="11" height="10" viewBox="0 0 11 10"><path d="M0.4 1.6 Q0.4 0.3 1.6 0.3 H4.2 Q5 0.3 5.5 1.1 L5.8 1.5 H9.6 Q10.7 1.5 10.7 2.7 V8.4 Q10.7 9.7 9.5 9.7 H1.6 Q0.4 9.7 0.4 8.4 Z" fill="#f9d766" stroke="#e6b93c" stroke-width=".7"/><path d="M0.8 4.3 H10.4" stroke="#d9981c" stroke-width="1"/></svg>
<svg class="abs" style="left:616.0px;top:522.0px" width="11" height="11" viewBox="0 0 11 11"><circle cx="5.5" cy="5.5" r="4.85" fill="#fff" fill-opacity=".75" stroke="#b4b4b4" stroke-width="1"/><path d="M3.2 5.5H7.8" stroke="#777" stroke-width="1"/></svg>
<div id="t54" class="t " style="left:667.30px;top:518.5px;letter-spacing:0.121px;">Контакты</div>
<div id="t55" class="t " style="left:1069.00px;top:518.5px;letter-spacing:-0.150px;">Вертикально</div>
<svg class="abs" style="left:549px;top:551px" width="19" height="19" viewBox="0 0 19 19"><rect x="0.5" y="0.5" width="18" height="18" rx="2" ry="2" fill="#fff" stroke="#a3a3a3"/><path d="M4.2 8.9 L8.3 12.3 L17.2 0.7" fill="none" stroke="#0f9447" stroke-width="2.8" stroke-linecap="round" stroke-linejoin="miter"/></svg>
<svg class="abs" style="left:663px;top:561px" width="12" height="6" viewBox="0 0 12 6"><rect x="0" y="0.3" width="12" height="5" rx="2.5" fill="url(#dg)"/></svg>
<div id="t56" class="t " style="left:690.55px;top:551.5px;letter-spacing:-0.277px;">Физ. лицо.Адрес для информирования</div>
<svg class="abs" style="left:549px;top:584px" width="19" height="19" viewBox="0 0 19 19"><rect x="0.5" y="0.5" width="18" height="18" rx="2" ry="2" fill="#fff" stroke="#a3a3a3"/><path d="M4.2 8.9 L8.3 12.3 L17.2 0.7" fill="none" stroke="#0f9447" stroke-width="2.8" stroke-linecap="round" stroke-linejoin="miter"/></svg>
<svg class="abs" style="left:662.5px;top:592px" width="11" height="10" viewBox="0 0 11 10"><path d="M0.4 1.6 Q0.4 0.3 1.6 0.3 H4.2 Q5 0.3 5.5 1.1 L5.8 1.5 H9.6 Q10.7 1.5 10.7 2.7 V8.4 Q10.7 9.7 9.5 9.7 H1.6 Q0.4 9.7 0.4 8.4 Z" fill="#f9d766" stroke="#e6b93c" stroke-width=".7"/><path d="M0.8 4.3 H10.4" stroke="#d9981c" stroke-width="1"/></svg>
<svg class="abs" style="left:639.0px;top:588.0px" width="11" height="11" viewBox="0 0 11 11"><circle cx="5.5" cy="5.5" r="4.85" fill="#fff" fill-opacity=".75" stroke="#b4b4b4" stroke-width="1"/><path d="M3.2 5.5H7.8" stroke="#777" stroke-width="1"/></svg>
<svg class="abs" style="left:549px;top:617px" width="19" height="19" viewBox="0 0 19 19"><rect x="0.5" y="0.5" width="18" height="18" rx="2" ry="2" fill="#fff" stroke="#a3a3a3"/><path d="M4.2 8.9 L8.3 12.3 L17.2 0.7" fill="none" stroke="#0f9447" stroke-width="2.8" stroke-linecap="round" stroke-linejoin="miter"/></svg>
<svg class="abs" style="left:686px;top:627px" width="12" height="6" viewBox="0 0 12 6"><rect x="0" y="0.3" width="12" height="5" rx="2.5" fill="url(#dg)"/></svg>
<div id="t57" class="t " style="left:713.55px;top:617.5px;letter-spacing:-0.472px;">Физ. лицо.Домашний телефон</div>
<svg class="abs" style="left:549px;top:650px" width="19" height="19" viewBox="0 0 19 19"><rect x="0.5" y="0.5" width="18" height="18" rx="2" ry="2" fill="#fff" stroke="#a3a3a3"/><path d="M4.2 8.9 L8.3 12.3 L17.2 0.7" fill="none" stroke="#0f9447" stroke-width="2.8" stroke-linecap="round" stroke-linejoin="miter"/></svg>
<svg class="abs" style="left:686px;top:660px" width="12" height="6" viewBox="0 0 12 6"><rect x="0" y="0.3" width="12" height="5" rx="2.5" fill="url(#dg)"/></svg>
<div id="t58" class="t " style="left:713.55px;top:650.5px;letter-spacing:-0.437px;">Физ. лицо.Мобильный телефон</div>
<div class="abs" style="left:1058px;top:578px;width:377px;height:32px;background:#fff"></div>
<div class="abs" style="left:1069px;top:585px;width:108px;height:18px;background:#5167c8"></div>
<div id="t59" class="t " style="left:1069.30px;top:585px;letter-spacing:-0.283px;color:#fff">Горизонтально</div>
<div class="abs" style="left:1408px;top:580px;width:1px;height:28px;background:#bdbdbd"></div>
<svg class="abs" style="left:1417px;top:592px" width="8" height="5" viewBox="0 0 8 5"><path d="M0.5 0.5H7.5L4 4.5Z" fill="#333"/></svg>
<div class="abs" style="left:1065px;top:613px;width:399px;height:167px;box-sizing:border-box;border:1px solid #6c6c6c;background:#fff;box-shadow:0 0 0 2.5px rgba(226,226,226,.95),0 2px 4px rgba(0,0,0,.12);border-radius:1px"></div>
<div class="abs" style="left:1066px;top:647px;width:397px;height:33px;background:#fbca25"></div>
<div id="t60" class="t " style="left:1086.50px;top:621px;letter-spacing:0.150px;transform:scaleX(1.0483);transform-origin:0 0;">Авто</div>
<div id="t61" class="t " style="left:1085.50px;top:654px;letter-spacing:-0.158px;">Горизонтально</div>
<div id="t62" class="t " style="left:1085.50px;top:687px;letter-spacing:-0.130px;">Вертикально</div>
<div id="t63" class="t " style="left:1085.50px;top:720px;letter-spacing:-0.267px;">В отдельной колонке</div>
<div id="t64" class="t " style="left:1085.47px;top:753px;letter-spacing:0.150px;transform:scaleX(1.0254);transform-origin:0 0;">Вместе</div>
</body></html>
